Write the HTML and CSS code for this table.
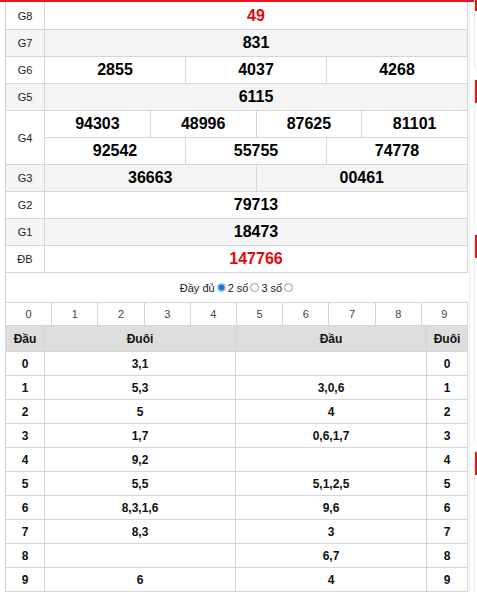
FILE: index.html
```html
<!DOCTYPE html>
<html lang="vi">
<head>
<meta charset="utf-8">
<title>KQXS</title>
<link rel="stylesheet" href="styles.css">
</head>
<body>
<div class="page">
  <div class="main">
    <div class="box">
      <div class="kq">
        <div class="row first"><div class="lbl">G8</div><div class="vals"><div class="v red">49</div></div></div>
        <div class="row alt"><div class="lbl">G7</div><div class="vals"><div class="v">831</div></div></div>
        <div class="row"><div class="lbl">G6</div><div class="vals"><div class="v">2855</div><div class="v">4037</div><div class="v">4268</div></div></div>
        <div class="row alt"><div class="lbl">G5</div><div class="vals"><div class="v">6115</div></div></div>
        <div class="row"><div class="lbl tall">G4</div>
          <div class="stack">
            <div class="vals"><div class="v">94303</div><div class="v">48996</div><div class="v">87625</div><div class="v">81101</div></div>
            <div class="vals"><div class="v">92542</div><div class="v">55755</div><div class="v">74778</div></div>
          </div>
        </div>
        <div class="row alt"><div class="lbl">G3</div><div class="vals"><div class="v">36663</div><div class="v">00461</div></div></div>
        <div class="row"><div class="lbl">G2</div><div class="vals"><div class="v">79713</div></div></div>
        <div class="row alt"><div class="lbl">G1</div><div class="vals"><div class="v">18473</div></div></div>
        <div class="row"><div class="lbl">ĐB</div><div class="vals"><div class="v red">147766</div></div></div>
      </div>

      <div class="opts">
        <label class="opt">Đầy đủ <input type="radio" name="m" class="rd" checked></label>
        <label class="opt">2 số <input type="radio" name="m" class="rd"></label>
        <label class="opt">3 số <input type="radio" name="m" class="rd"></label>
      </div>

      <div class="digits">
        <div>0</div><div>1</div><div>2</div><div>3</div><div>4</div><div>5</div><div>6</div><div>7</div><div>8</div><div>9</div>
      </div>

      <div class="lt">
        <div class="h">Đầu</div><div class="h">Đuôi</div><div class="h">Đầu</div><div class="h">Đuôi</div>
        <div>0</div><div>3,1</div><div></div><div>0</div>
        <div>1</div><div>5,3</div><div>3,0,6</div><div>1</div>
        <div>2</div><div>5</div><div>4</div><div>2</div>
        <div>3</div><div>1,7</div><div>0,6,1,7</div><div>3</div>
        <div>4</div><div>9,2</div><div></div><div>4</div>
        <div>5</div><div>5,5</div><div>5,1,2,5</div><div>5</div>
        <div>6</div><div>8,3,1,6</div><div>9,6</div><div>6</div>
        <div>7</div><div>8,3</div><div>3</div><div>7</div>
        <div>8</div><div></div><div>6,7</div><div>8</div>
        <div>9</div><div>6</div><div>4</div><div>9</div>
      </div>
    </div>
  </div>
  <div class="side">
    <div class="card c1"><div class="chead"></div></div>
    <div class="card c2"><div class="chead"></div></div>
    <div class="card c3"><div class="chead"></div></div>
    <div class="card c4"><div class="chead"></div></div>
  </div>
</div>
</body>
</html>
```

FILE: styles.css
```css
* { box-sizing: border-box; }
html, body { margin: 0; padding: 0; background: #fff; }
body {
  font-family: "Liberation Sans", Arial, sans-serif;
  color: #000;
  overflow: hidden;
}
.page {
  display: flex;
  align-items: flex-start;
  width: 477px;
  height: 592px;
  overflow: hidden;
}
.main {
  width: 474px;
  flex-shrink: 0;
  border-top: 2px solid #e8141c;
  padding-left: 5px;
}
.box {
  width: 465px;
  border-left: 1px solid #d6d6d6;
  border-right: 1px solid #ececec;
}
.kq {
  width: 462px;
}
.row {
  display: flex;
  background: #fff;
}
.row.alt { background: #f4f4f4; }
.lbl {
  width: 39px;
  flex-shrink: 0;
  height: 27px;
  display: flex;
  align-items: center;
  justify-content: center;
  font-size: 11px;
  color: #222;
  border-right: 1px solid #d6d6d6;
  border-bottom: 1px solid #d6d6d6;
}
.row .lbl.tall { height: auto; }
.stack { flex: 1; display: flex; flex-direction: column; }
.vals {
  flex: 1;
  display: flex;
}
.v {
  flex: 1 1 0;
  height: 27px;
  display: flex;
  align-items: center;
  justify-content: center;
  font-size: 16px;
  font-weight: bold;
  border-right: 1px solid #d6d6d6;
  border-bottom: 1px solid #d6d6d6;
}
.row.first .lbl, .row.first .v { height: 28px; padding-top: 1px; }
.red { color: #e20a0a; }

.opts {
  height: 29px;
  display: flex;
  align-items: center;
  justify-content: center;
  font-size: 11px;
  color: #222;
}
.opt {
  display: inline-flex;
  align-items: center;
}
.rd {
  appearance: none;
  -webkit-appearance: none;
  width: 9px;
  height: 9px;
  margin: 0 2px;
  border: 1px solid #9a9a9a;
  border-radius: 50%;
  background: #fff;
}
.rd:checked {
  border-color: #7fb2ec;
  background: radial-gradient(circle, #1a7ae0 0 2.8px, #cfe3fa 3.3px);
}

.digits {
  width: 462px;
  display: grid;
  grid-template-columns: repeat(10, 1fr);
  border-top: 1px solid #d6d6d6;
}
.digits div {
  height: 23px;
  display: flex;
  align-items: center;
  justify-content: center;
  font-size: 11px;
  color: #444;
  border-right: 1px solid #d6d6d6;
  border-bottom: 1px solid #d6d6d6;
}
.lt {
  width: 462px;
  display: grid;
  grid-template-columns: 39px 191px 191px 41px;
}
.lt div {
  height: 24px;
  display: flex;
  align-items: center;
  justify-content: center;
  font-size: 12px;
  font-weight: bold;
  color: #111;
  border-right: 1px solid #d6d6d6;
  border-bottom: 1px solid #d6d6d6;
}
.lt div.h {
  height: 26px;
  background: #dedede;
}

.side {
  width: 3px;
  overflow: hidden;
  display: flex;
  flex-direction: column;
  gap: 5px;
  margin-top: -15px;
}
.card {
  width: 30px;
  flex-shrink: 0;
  border: 1px solid #ececec;
  border-radius: 5px;
  padding-top: 2px;
  background: #fff;
}
.chead {
  height: 23px;
  border-left: 3px solid #e8141c;
}
.c1 { height: 87px; }
.c2 { height: 150px; }
.c3 { height: 212px; }
.c4 { height: 200px; }
```
